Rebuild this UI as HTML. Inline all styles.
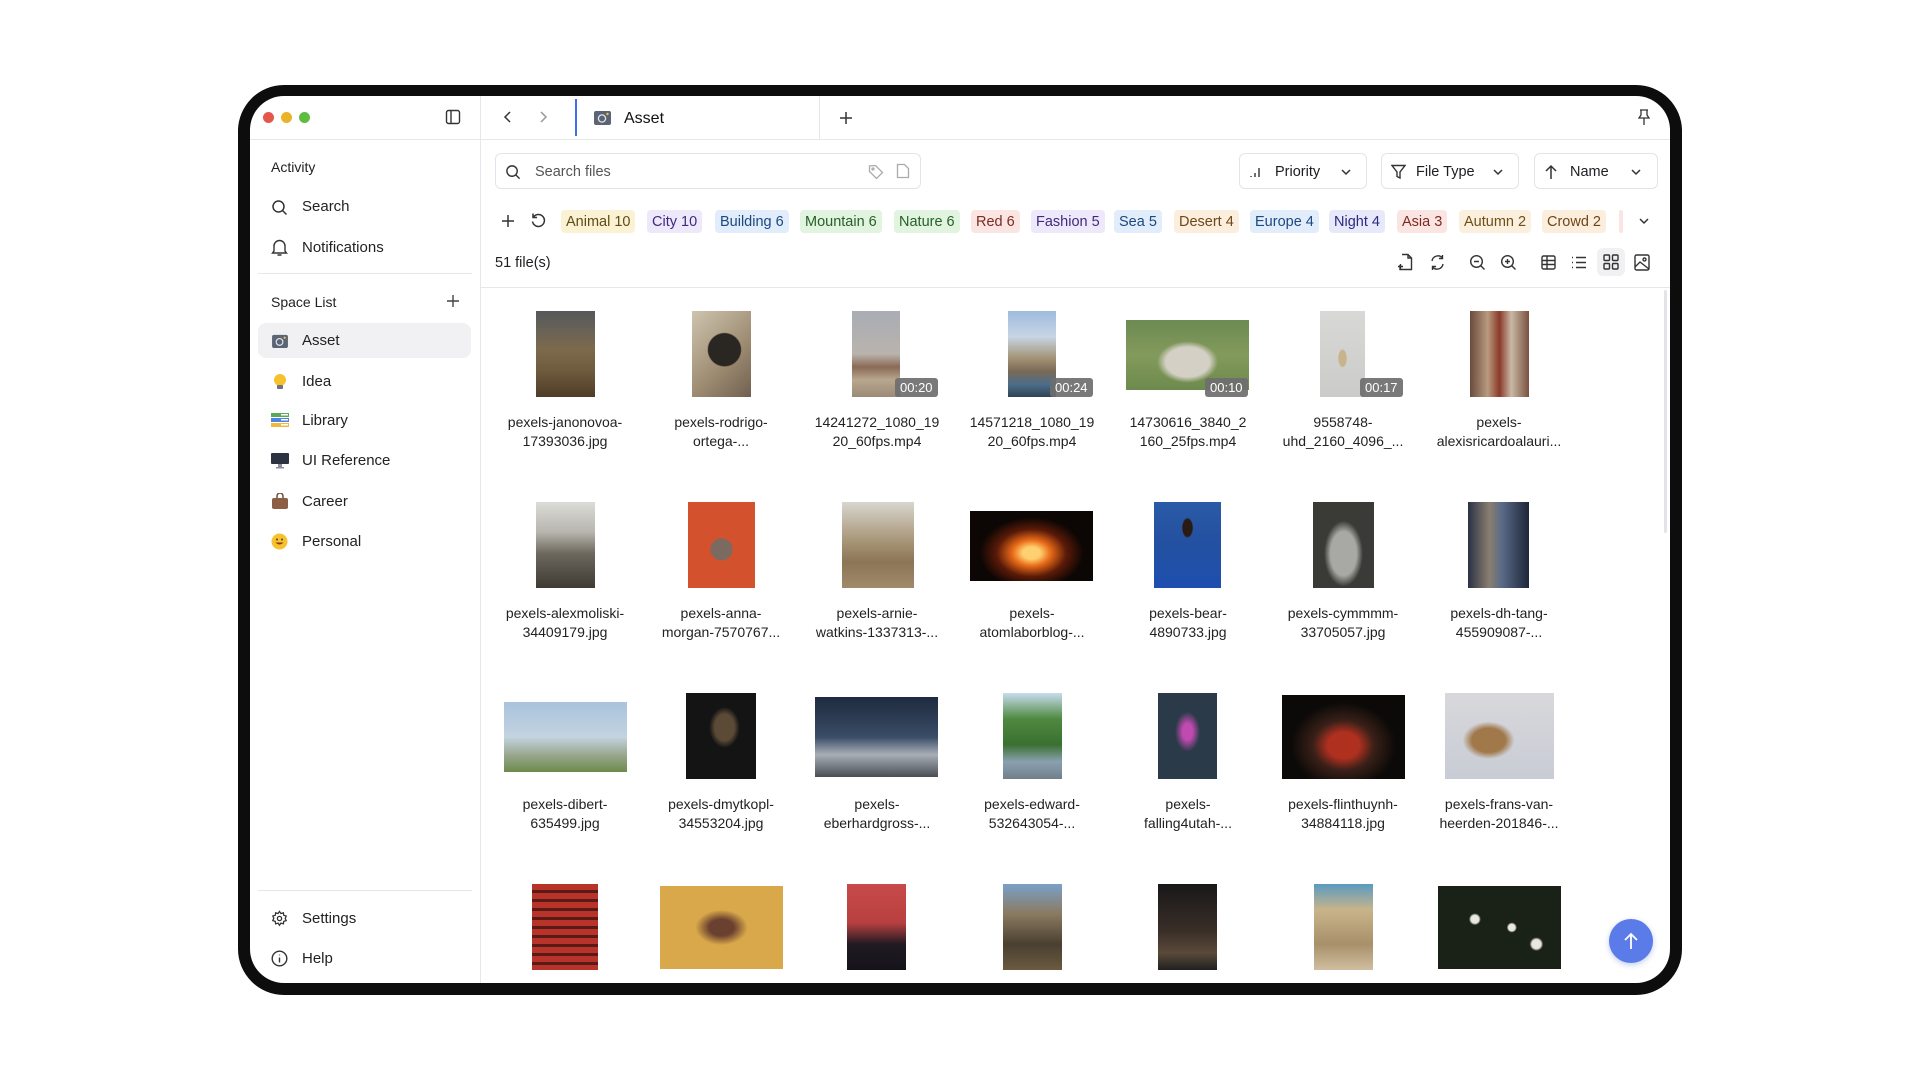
<!DOCTYPE html>
<html><head><meta charset="utf-8"><style>
*{margin:0;padding:0;box-sizing:border-box}
body{width:1920px;height:1080px;background:#fff;font-family:"Liberation Sans",sans-serif;color:#1d1d22;position:relative;overflow:hidden}
.a{position:absolute}
.frame{left:238px;top:85px;width:1444px;height:910px;background:#0d0d0d;border-radius:46px}
.inner{left:250px;top:96px;width:1420px;height:887px;background:#fff;border-radius:34px;overflow:hidden}
.t{position:absolute;white-space:nowrap}
.side{font-size:15px;color:#222}
.chip{position:absolute;top:210px;height:23px;line-height:24px;font-size:14.5px;padding:0 5px;border-radius:4px;white-space:nowrap}
.box{position:absolute;border:1px solid #e3e4ea;border-radius:6px;height:36px;top:153px}
.th{position:absolute}
.lbl{position:absolute;width:150px;text-align:center;font-size:14px;line-height:19px;color:#222}
.badge{position:absolute;background:rgba(110,110,110,.92);color:#fff;font-size:13px;line-height:19px;padding:0 5px;border-radius:3px}
svg{position:absolute}
</style></head><body>
<div class="a frame"></div>
<div class="a inner"></div>
<div class="a" style="left:250px;top:139px;width:1420px;height:1px;background:#e6e7ec"></div>
<div class="a" style="left:480px;top:96px;width:1px;height:887px;background:#e6e7ec"></div>
<div class="a" style="left:819px;top:96px;width:1px;height:44px;background:#e6e7ec"></div>
<div class="a" style="left:575px;top:99px;width:2px;height:37px;background:#3d6ef0"></div>
<div class="a" style="left:263px;top:112px;width:11px;height:11px;border-radius:50%;background:#e5574b"></div>
<div class="a" style="left:281px;top:112px;width:11px;height:11px;border-radius:50%;background:#eab32a"></div>
<div class="a" style="left:299px;top:112px;width:11px;height:11px;border-radius:50%;background:#5ebd3e"></div>
<svg style="left:445px;top:109px" width="16" height="16" viewBox="0 0 16 16" fill="none" stroke="#333" stroke-width="1.4"><rect x="1.5" y="1.5" width="13" height="13" rx="2"/><line x1="6" y1="1.5" x2="6" y2="14.5"/></svg>
<svg style="left:502px;top:110px" width="12" height="14" viewBox="0 0 12 14" fill="none" stroke="#333" stroke-width="1.5"><path d="M8 2L3 7l5 5"/></svg>
<svg style="left:537px;top:110px" width="12" height="14" viewBox="0 0 12 14" fill="none" stroke="#999" stroke-width="1.5"><path d="M4 2l5 5-5 5"/></svg>
<svg style="left:594px;top:110px" width="17" height="15" viewBox="0 0 17 15"><rect x="0" y="1" width="17" height="14" rx="2" fill="#5a6474"/><circle cx="8" cy="8.5" r="3.6" fill="none" stroke="#dfe3ea" stroke-width="1.3"/><circle cx="13.5" cy="4" r="1.2" fill="#f3c33a"/></svg>
<div class="t" style="left:624px;top:110px;font-size:16px;color:#111">Asset</div>
<svg style="left:838px;top:110px" width="16" height="16" viewBox="0 0 16 16" stroke="#333" stroke-width="1.5"><path d="M8 2v12M2 8h12"/></svg>
<svg style="left:1636px;top:108px" width="16" height="18" viewBox="0 0 16 18" fill="none" stroke="#333" stroke-width="1.3"><path d="M4 2h8M5 2v5l-2 3h10l-2-3V2M8 10v7"/></svg>

<div class="t side" style="left:271px;top:159px;font-size:14px">Activity</div>
<svg style="left:271px;top:199px" width="17" height="17" viewBox="0 0 17 17" fill="none" stroke="#333" stroke-width="1.5"><circle cx="7.5" cy="7.5" r="5.5"/><path d="M11.5 11.5l4 4"/></svg>
<div class="t side" style="left:302px;top:198px">Search</div>
<svg style="left:271px;top:238px" width="17" height="19" viewBox="0 0 17 19" fill="none" stroke="#333" stroke-width="1.4"><path d="M3 13V8a5.5 5.5 0 0111 0v5l1.5 2h-14z M6.5 17h4"/></svg>
<div class="t side" style="left:302px;top:239px">Notifications</div>
<div class="a" style="left:258px;top:273px;width:214px;height:1px;background:#e6e7ec"></div>
<div class="t side" style="left:271px;top:294px;font-size:14px">Space List</div>
<svg style="left:445px;top:293px" width="16" height="16" viewBox="0 0 16 16" stroke="#444" stroke-width="1.4"><path d="M8 2v12M2 8h12"/></svg>
<div class="a" style="left:258px;top:323px;width:213px;height:35px;background:#f1f1f3;border-radius:8px"></div>
<svg style="left:272px;top:334px" width="16" height="14" viewBox="0 0 17 15"><rect x="0" y="1" width="17" height="14" rx="2" fill="#5a6474"/><circle cx="8" cy="8.5" r="3.6" fill="none" stroke="#dfe3ea" stroke-width="1.3"/><circle cx="13.5" cy="4" r="1.2" fill="#f3c33a"/></svg>
<div class="t side" style="left:302px;top:332px">Asset</div>
<svg style="left:272px;top:373px" width="16" height="18" viewBox="0 0 16 18"><circle cx="8" cy="7" r="6" fill="#f5c22e"/><rect x="5" y="12" width="6" height="4" rx="1" fill="#6b7180"/></svg>
<div class="t side" style="left:302px;top:373px">Idea</div>
<svg style="left:271px;top:413px" width="18" height="15" viewBox="0 0 18 15"><rect x="0" y="0" width="18" height="4" fill="#5aa858"/><rect x="0" y="5" width="18" height="4" fill="#4b82e8"/><rect x="0" y="10" width="18" height="4" fill="#f0b93a"/><rect x="10" y="1" width="7" height="1.5" fill="#fff"/><rect x="10" y="6" width="7" height="1.5" fill="#fff"/><rect x="10" y="11" width="7" height="1.5" fill="#fff"/></svg>
<div class="t side" style="left:302px;top:412px">Library</div>
<svg style="left:271px;top:453px" width="18" height="16" viewBox="0 0 18 16"><rect x="0" y="0" width="18" height="11" rx="1" fill="#2d3340"/><rect x="7" y="11" width="4" height="3" fill="#8a8f99"/><rect x="5" y="14" width="8" height="1.5" fill="#8a8f99"/></svg>
<div class="t side" style="left:302px;top:452px">UI Reference</div>
<svg style="left:271px;top:493px" width="18" height="16" viewBox="0 0 18 16"><path d="M6 5V3a3 3 0 016 0v2" fill="none" stroke="#6b4a36" stroke-width="1.5"/><rect x="1" y="5" width="16" height="11" rx="2" fill="#8b5e45"/></svg>
<div class="t side" style="left:302px;top:493px">Career</div>
<svg style="left:271px;top:533px" width="17" height="17" viewBox="0 0 17 17"><circle cx="8.5" cy="8.5" r="8" fill="#f5c22e"/><circle cx="6" cy="6.5" r="1" fill="#5a3b1a"/><circle cx="11" cy="6.5" r="1" fill="#5a3b1a"/><path d="M4.5 9.5q4 4 8 0" fill="#8a3a1a"/></svg>
<div class="t side" style="left:302px;top:533px">Personal</div>
<div class="a" style="left:258px;top:890px;width:214px;height:1px;background:#e6e7ec"></div>
<svg style="left:271px;top:910px" width="17" height="17" viewBox="0 0 24 24" fill="none" stroke="#333" stroke-width="1.8"><circle cx="12" cy="12" r="3"/><path d="M12 2l2 3 3.5-1 .5 3.5 3.5 1-1.5 3.5 1.5 3-3.5 1-.5 3.5-3.5-1-2 3-2-3-3.5 1-.5-3.5-3.5-1 1.5-3.5L2.5 8.5l3.5-1L6.5 4 10 5z"/></svg>
<div class="t side" style="left:302px;top:910px">Settings</div>
<svg style="left:271px;top:950px" width="17" height="17" viewBox="0 0 17 17" fill="none" stroke="#333" stroke-width="1.4"><circle cx="8.5" cy="8.5" r="7.3"/><path d="M8.5 7.5v5M8.5 4.6v.8"/></svg>
<div class="t side" style="left:302px;top:950px">Help</div>

<div class="box" style="left:495px;width:426px"></div>
<svg style="left:505px;top:164px" width="16" height="16" viewBox="0 0 17 17" fill="none" stroke="#333" stroke-width="1.5"><circle cx="7.5" cy="7.5" r="5.5"/><path d="M11.5 11.5l4 4"/></svg>
<div class="t" style="left:535px;top:164px;font-size:14.5px;color:#555">Search files</div>
<svg style="left:868px;top:164px" width="16" height="16" viewBox="0 0 16 16" fill="none" stroke="#aaa" stroke-width="1.3"><path d="M1.5 2v5.5l7 7 6-6-7-7z"/><circle cx="5" cy="5" r="1"/></svg>
<svg style="left:896px;top:163px" width="14" height="16" viewBox="0 0 14 16" fill="none" stroke="#aaa" stroke-width="1.3"><path d="M1.5 1.5h7l4 4v9h-11z"/></svg>
<div class="box" style="left:1239px;width:128px"></div>
<svg style="left:1249px;top:166px" width="14" height="12" viewBox="0 0 14 12" stroke="#333" stroke-width="1.4"><path d="M2 11v-1M6 11V7M10 11V2"/></svg>
<div class="t" style="left:1275px;top:164px;font-size:14.5px">Priority</div>
<svg style="left:1340px;top:167px" width="12" height="10" viewBox="0 0 12 10" fill="none" stroke="#333" stroke-width="1.5"><path d="M2 3l4 4 4-4"/></svg>
<div class="box" style="left:1381px;width:138px"></div>
<svg style="left:1391px;top:164px" width="15" height="16" viewBox="0 0 15 16" fill="none" stroke="#333" stroke-width="1.4"><path d="M1 1.5h13L9 8v6l-3-1.5V8z"/></svg>
<div class="t" style="left:1416px;top:164px;font-size:14.5px">File Type</div>
<svg style="left:1492px;top:167px" width="12" height="10" viewBox="0 0 12 10" fill="none" stroke="#333" stroke-width="1.5"><path d="M2 3l4 4 4-4"/></svg>
<div class="box" style="left:1534px;width:124px"></div>
<svg style="left:1544px;top:164px" width="14" height="16" viewBox="0 0 14 16" fill="none" stroke="#333" stroke-width="1.5"><path d="M7 15V2M2 7l5-5 5 5"/></svg>
<div class="t" style="left:1570px;top:164px;font-size:14.5px">Name</div>
<svg style="left:1630px;top:167px" width="12" height="10" viewBox="0 0 12 10" fill="none" stroke="#333" stroke-width="1.5"><path d="M2 3l4 4 4-4"/></svg>

<svg style="left:500px;top:213px" width="16" height="16" viewBox="0 0 16 16" stroke="#333" stroke-width="1.5"><path d="M8 2v12M2 8h12"/></svg>
<svg style="left:530px;top:212px" width="17" height="17" viewBox="0 0 17 17" fill="none" stroke="#333" stroke-width="1.5"><path d="M3.5 5A6 6 0 1 1 2.5 9.5M3 1.5V5.5h4"/></svg>
<div class="chip" style="left:561px;background:#fbf2d4;color:#5e4c16">Animal 10</div>
<div class="chip" style="left:647px;background:#eee8fb;color:#3f2a80">City 10</div>
<div class="chip" style="left:715px;background:#e2edfb;color:#1c4880">Building 6</div>
<div class="chip" style="left:800px;background:#e1f4df;color:#285f28">Mountain 6</div>
<div class="chip" style="left:894px;background:#e1f4df;color:#285f28">Nature 6</div>
<div class="chip" style="left:971px;background:#fbe5e2;color:#7c2a22">Red 6</div>
<div class="chip" style="left:1031px;background:#eee8fb;color:#3f2a80">Fashion 5</div>
<div class="chip" style="left:1114px;background:#e2edfb;color:#1c4880">Sea 5</div>
<div class="chip" style="left:1174px;background:#fbeedd;color:#6e461a">Desert 4</div>
<div class="chip" style="left:1250px;background:#e2edfb;color:#1c4880">Europe 4</div>
<div class="chip" style="left:1329px;background:#e8e8fb;color:#2a2a80">Night 4</div>
<div class="chip" style="left:1397px;background:#fbe5e2;color:#7c2a22">Asia 3</div>
<div class="chip" style="left:1459px;background:#fbf0dd;color:#6e4e1a">Autumn 2</div>
<div class="chip" style="left:1542px;background:#fbeedd;color:#6e461a">Crowd 2</div>
<div class="chip" style="left:1619px;width:4px;padding:0;background:#fbe5e2"></div>
<svg style="left:1638px;top:216px" width="12" height="10" viewBox="0 0 12 10" fill="none" stroke="#333" stroke-width="1.5"><path d="M2 3l4 4 4-4"/></svg>

<div class="t" style="left:495px;top:255px;font-size:14.5px">51 file(s)</div>
<svg style="left:1397px;top:253px" width="16" height="18" viewBox="0 0 16 18" fill="none" stroke="#333" stroke-width="1.4"><path d="M5 1.5h6l3.5 3.5v11.5H3V12M11 1.5V5h3.5M1 13.5h5M3.5 11v5"/></svg>
<svg style="left:1429px;top:254px" width="17" height="17" viewBox="0 0 17 17" fill="none" stroke="#333" stroke-width="1.4"><path d="M3 7a6 6 0 0110.5-3M14 10a6 6 0 01-10.5 3M13.5 1v3.5H10M3.5 16v-3.5H7"/></svg>
<svg style="left:1469px;top:254px" width="17" height="17" viewBox="0 0 17 17" fill="none" stroke="#333" stroke-width="1.4"><circle cx="7.5" cy="7.5" r="5.8"/><path d="M11.8 11.8l3.7 3.7M5 7.5h5"/></svg>
<svg style="left:1500px;top:254px" width="17" height="17" viewBox="0 0 17 17" fill="none" stroke="#333" stroke-width="1.4"><circle cx="7.5" cy="7.5" r="5.8"/><path d="M11.8 11.8l3.7 3.7M5 7.5h5M7.5 5v5"/></svg>
<svg style="left:1541px;top:255px" width="15" height="15" viewBox="0 0 15 15" fill="none" stroke="#333" stroke-width="1.4"><rect x="1" y="1" width="13" height="13" rx="1.5"/><path d="M1 5.5h13M1 9.5h13M6 1v13"/></svg>
<svg style="left:1571px;top:255px" width="16" height="15" viewBox="0 0 16 15" fill="none" stroke="#333" stroke-width="1.4"><path d="M5 2.5h10M5 7.5h10M5 12.5h10M1 2.5h1M1 7.5h1M1 12.5h1"/></svg>
<div class="a" style="left:1597px;top:248px;width:28px;height:28px;border-radius:6px;background:#f1f1f3"></div>
<svg style="left:1603px;top:254px" width="16" height="16" viewBox="0 0 16 16" fill="none" stroke="#333" stroke-width="1.4"><rect x="1" y="1" width="5.5" height="5.5" rx="1"/><rect x="9.5" y="1" width="5.5" height="5.5" rx="1"/><rect x="1" y="9.5" width="5.5" height="5.5" rx="1"/><rect x="9.5" y="9.5" width="5.5" height="5.5" rx="1"/></svg>
<svg style="left:1634px;top:254px" width="16" height="17" viewBox="0 0 16 17" fill="none" stroke="#333" stroke-width="1.4"><rect x="1" y="1" width="14" height="15" rx="1.5"/><path d="M1 13l5-5 9 7"/><circle cx="10.5" cy="5.5" r="1.5"/></svg>
<div class="a" style="left:481px;top:287px;width:1189px;height:1px;background:#e6e7ec"></div>
<div class="a" style="left:1664px;top:290px;width:3px;height:243px;border-radius:2px;background:#e3e4e8"></div>

<div class="a" style="left:481px;top:288px;width:1180px;height:695px;overflow:hidden">
<div style="position:absolute;left:-481px;top:-288px;width:1920px;height:1080px">
<div class="th" style="left:536px;top:311px;width:59px;height:86px;background:linear-gradient(#56585a 0%,#6b6356 25%,#7d6a4c 45%,#6e5a3c 70%,#4e3d28)"></div>
<div class="th" style="left:692px;top:311px;width:59px;height:86px;background:radial-gradient(circle at 55% 45%,#2a2622 0 28%,transparent 30%),linear-gradient(135deg,#cfc4b0,#9c8a70 60%,#6f6050)"></div>
<div class="th" style="left:852px;top:311px;width:48px;height:86px;background:linear-gradient(#a9adb5 0%,#b9b3ad 50%,#8a6a55 65%,#b8a68e 80%,#9b8a75)"></div>
<div class="badge" style="left:895px;top:378px">00:20</div>
<div class="th" style="left:1008px;top:311px;width:48px;height:86px;background:linear-gradient(#9dbbdd 0%,#c7d5e4 30%,#a39274 55%,#7a6a55 70%,#4c6d8a 85%,#2f4455)"></div>
<div class="badge" style="left:1050px;top:378px">00:24</div>
<div class="th" style="left:1126px;top:320px;width:123px;height:70px;background:radial-gradient(ellipse at 50% 60%,#d5d0c5 0 25%,transparent 35%),linear-gradient(#6c8a52,#839a5c 50%,#6d8a4d)"></div>
<div class="badge" style="left:1205px;top:378px">00:10</div>
<div class="th" style="left:1320px;top:311px;width:45px;height:86px;background:radial-gradient(ellipse at 50% 55%,#c7b48a 0 12%,transparent 14%),linear-gradient(#d8d8d6,#cbcbc9)"></div>
<div class="badge" style="left:1360px;top:378px">00:17</div>
<div class="th" style="left:1470px;top:311px;width:59px;height:86px;background:linear-gradient(90deg,#6a4a3a,#b89a80 30%,#8a3a2a 50%,#c9b8a5 70%,#7a5040)"></div>
<div class="th" style="left:536px;top:502px;width:59px;height:86px;background:linear-gradient(#dcdcd8 0%,#b7b5ae 35%,#6d685e 60%,#3f3a32)"></div>
<div class="th" style="left:688px;top:502px;width:67px;height:86px;background:radial-gradient(circle at 50% 55%,#7a6a60 0 18%,transparent 20%),#d4512e"></div>
<div class="th" style="left:842px;top:502px;width:72px;height:86px;background:linear-gradient(#d8d6cf,#a89678 45%,#8a7556 70%,#a08a6a)"></div>
<div class="th" style="left:970px;top:511px;width:123px;height:70px;background:radial-gradient(ellipse at 50% 60%,#ffd070 0 10%,#e86a18 22%,#5a1a08 40%,#0c0604 60%)"></div>
<div class="th" style="left:1154px;top:502px;width:67px;height:86px;background:radial-gradient(ellipse at 50% 30%,#2a1a14 0 10%,transparent 12%),linear-gradient(#2a5aa8,#2350a0 50%,#1e4fb0)"></div>
<div class="th" style="left:1313px;top:502px;width:61px;height:86px;background:radial-gradient(ellipse at 50% 60%,#a8a8a4 0 30%,transparent 45%),#3a3a36"></div>
<div class="th" style="left:1468px;top:502px;width:61px;height:86px;background:linear-gradient(90deg,#2a3245,#8a7f70 35%,#5a6a88 55%,#1e2638)"></div>
<div class="th" style="left:504px;top:702px;width:123px;height:70px;background:linear-gradient(#a9c3dd 0%,#c3d3e0 50%,#9aa890 75%,#6d8a4a)"></div>
<div class="th" style="left:686px;top:693px;width:70px;height:86px;background:radial-gradient(ellipse at 55% 40%,#5a4a36 0 18%,transparent 28%),#141414"></div>
<div class="th" style="left:815px;top:697px;width:123px;height:80px;background:linear-gradient(#1e2a3e,#3a4c66 50%,#a8aeb6 72%,#4a4e55)"></div>
<div class="th" style="left:1003px;top:693px;width:59px;height:86px;background:linear-gradient(#c8dcef 0%,#4f8a40 30%,#3a7030 60%,#8aa0b0 80%,#70808a)"></div>
<div class="th" style="left:1158px;top:693px;width:59px;height:86px;background:radial-gradient(ellipse at 50% 45%,#c04ab0 0 12%,#2a3a48 30%),#1a2228"></div>
<div class="th" style="left:1282px;top:695px;width:123px;height:84px;background:radial-gradient(ellipse at 50% 60%,#b03020 0 18%,#3a2018 35%,#0c0a08 60%)"></div>
<div class="th" style="left:1445px;top:693px;width:109px;height:86px;background:radial-gradient(ellipse at 40% 55%,#a0784a 0 18%,transparent 28%),linear-gradient(#d8d8dc,#c8ccd4)"></div>
<div class="th" style="left:532px;top:884px;width:66px;height:86px;background:repeating-linear-gradient(#b8342a 0 6px,#5a1a16 6px 9px)"></div>
<div class="th" style="left:660px;top:886px;width:123px;height:83px;background:radial-gradient(ellipse at 50% 50%,#6a4030 0 14%,#d8a84a 30%),#eabb28"></div>
<div class="th" style="left:847px;top:884px;width:59px;height:86px;background:linear-gradient(#c84a4a,#b84040 45%,#201a22 70%,#15131a)"></div>
<div class="th" style="left:1003px;top:884px;width:59px;height:86px;background:linear-gradient(#7aa0c8,#8a7a60 35%,#4a4030 70%,#6a5a40)"></div>
<div class="th" style="left:1158px;top:884px;width:59px;height:86px;background:linear-gradient(#181818,#3a2e28 55%,#5a4a3a 80%,#202020)"></div>
<div class="th" style="left:1314px;top:884px;width:59px;height:86px;background:linear-gradient(#5a9ac0,#c8b48a 30%,#a8906a 70%,#d0bea0)"></div>
<div class="th" style="left:1438px;top:886px;width:123px;height:83px;background:radial-gradient(circle at 30% 40%,#e8e8e0 0 4%,transparent 6%),radial-gradient(circle at 60% 50%,#e8e8e0 0 4%,transparent 6%),radial-gradient(circle at 80% 70%,#e8e8e0 0 4%,transparent 6%),#1a2218"></div>
<div class="lbl" style="left:490px;top:413px">pexels-janonovoa-<br>17393036.jpg</div>
<div class="lbl" style="left:646px;top:413px">pexels-rodrigo-<br>ortega-...</div>
<div class="lbl" style="left:802px;top:413px">14241272_1080_19<br>20_60fps.mp4</div>
<div class="lbl" style="left:957px;top:413px">14571218_1080_19<br>20_60fps.mp4</div>
<div class="lbl" style="left:1113px;top:413px">14730616_3840_2<br>160_25fps.mp4</div>
<div class="lbl" style="left:1268px;top:413px">9558748-<br>uhd_2160_4096_...</div>
<div class="lbl" style="left:1424px;top:413px">pexels-<br>alexisricardoalauri...</div>
<div class="lbl" style="left:490px;top:604px">pexels-alexmoliski-<br>34409179.jpg</div>
<div class="lbl" style="left:646px;top:604px">pexels-anna-<br>morgan-7570767...</div>
<div class="lbl" style="left:802px;top:604px">pexels-arnie-<br>watkins-1337313-...</div>
<div class="lbl" style="left:957px;top:604px">pexels-<br>atomlaborblog-...</div>
<div class="lbl" style="left:1113px;top:604px">pexels-bear-<br>4890733.jpg</div>
<div class="lbl" style="left:1268px;top:604px">pexels-cymmmm-<br>33705057.jpg</div>
<div class="lbl" style="left:1424px;top:604px">pexels-dh-tang-<br>455909087-...</div>
<div class="lbl" style="left:490px;top:795px">pexels-dibert-<br>635499.jpg</div>
<div class="lbl" style="left:646px;top:795px">pexels-dmytkopl-<br>34553204.jpg</div>
<div class="lbl" style="left:802px;top:795px">pexels-<br>eberhardgross-...</div>
<div class="lbl" style="left:957px;top:795px">pexels-edward-<br>532643054-...</div>
<div class="lbl" style="left:1113px;top:795px">pexels-<br>falling4utah-...</div>
<div class="lbl" style="left:1268px;top:795px">pexels-flinthuynh-<br>34884118.jpg</div>
<div class="lbl" style="left:1424px;top:795px">pexels-frans-van-<br>heerden-201846-...</div>
</div></div>
<div class="a" style="left:1609px;top:919px;width:44px;height:44px;border-radius:50%;background:#5b7be8;box-shadow:0 2px 6px rgba(60,90,200,.3)"></div>
<svg style="left:1622px;top:931px" width="18" height="20" viewBox="0 0 18 20" fill="none" stroke="#fff" stroke-width="1.8"><path d="M9 18V3M3 9l6-6 6 6"/></svg>
</body></html>
